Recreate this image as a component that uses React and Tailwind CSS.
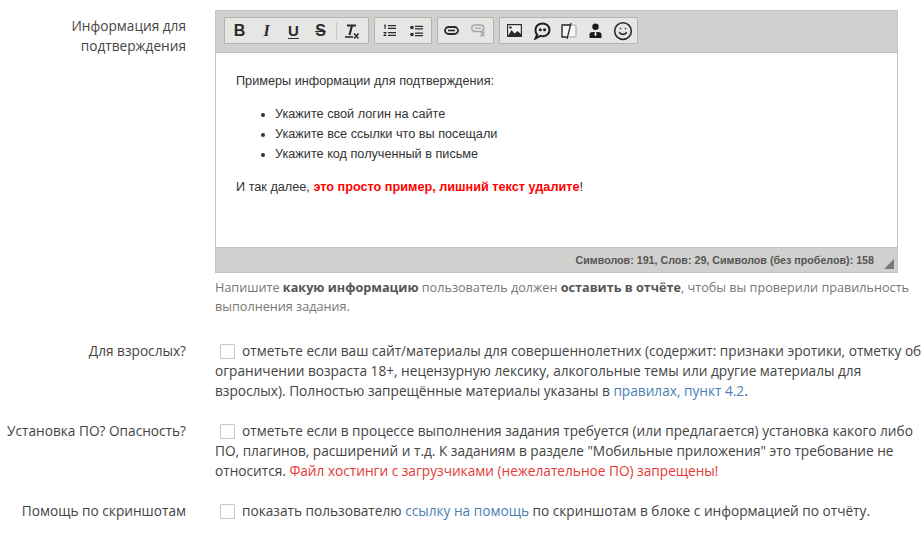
import { Smile } from 'lucide-react'

function Group({ children }) {
    return (
        <div className="flex h-[27px] items-center rounded-[1px] border border-[#b5b5b0] bg-[#e6e6e4] text-[#2b2b2b]">
            {children}
        </div>
    )
}

function Btn({ children, className = '' }) {
    return <span className={`flex h-[20px] w-[27px] items-center justify-center ${className}`}>{children}</span>
}

function Row({ label, top, children }) {
    return (
        <div className="grid grid-cols-[186px_709px] gap-x-[29px]">
            <div className="text-right" style={top ? { paddingTop: top } : undefined}>{label}</div>
            <div>{children}</div>
        </div>
    )
}

function Check() {
    return <span className="mr-[7px] ml-[5px] inline-block h-[15px] w-[15px] rounded-[1px] border border-[#c8c8c8] bg-white align-[-3px]"></span>
}

export default function App() {
    return (
        <div className="h-[533px] w-[924px] overflow-hidden bg-white pt-[10px] font-['Open_Sans',sans-serif] text-[13.670px] leading-[20px] text-[#444]">
            <Row label={<span className="block pl-[40px]">Информация для подтверждения</span>} top="6px">
                <div className="w-[683px] border border-[#c4c4c0]">
                    <div className="flex h-[41px] gap-[5px] bg-[#d0d1ce] pt-[6px] pl-[8px]">
                        <Group>
                            <span className="w-px"></span>
                            <Btn className="font-['Liberation_Sans',sans-serif] text-[16px] font-bold">B</Btn>
                            <Btn className="font-['Liberation_Serif',serif] text-[16px] font-bold italic">I</Btn>
                            <Btn className="font-['Liberation_Sans',sans-serif] text-[15px] font-bold underline underline-offset-2">U</Btn>
                            <Btn className="font-['Liberation_Sans',sans-serif] text-[16px] font-bold line-through">S</Btn>
                            <span className="mr-px ml-[2px] h-[18px] w-px bg-[#c9c9c6]"></span>
                            <Btn>
                                <svg width="18" height="18" viewBox="0 0 18 18" fill="none" stroke="#2b2b2b">
                                    <path d="M4 3.500h9M9 3.500 6.500 13" strokeWidth="2.200" />
                                    <path d="M2 15h8" strokeWidth="1.600" />
                                    <path d="m11 11.500 4.500 5m0-5L11 16.500" strokeWidth="1.500" />
                                </svg>
                            </Btn>
                            <span className="w-[3px]"></span>
                        </Group>
                        <Group>
                            <span className="w-px"></span>
                            <Btn>
                                <svg width="13" height="13" viewBox="0 0 13 13" fill="#2b2b2b">
                                    <path d="M1.500.5h1.200v4.500H1.500zM.8 1.200h1v.8h-1z" />
                                    <path d="M.5 8h3v1l-1.700 2h1.700v1h-3v-1l1.700-2H.5z" />
                                    <path d="M5 1h8v1.300H5zM5 3.700h8V5H5zM5 8h8v1.300H5zM5 10.700h8V12H5z" />
                                </svg>
                            </Btn>
                            <Btn>
                                <svg width="13" height="12" viewBox="0 0 13 12" fill="#2b2b2b">
                                    <circle cx="2" cy="2.500" r="1.800" />
                                    <circle cx="2" cy="9.500" r="1.800" />
                                    <path d="M5 .8h8v1.300H5zM5 3.200h8v1.300H5zM5 7.500h8v1.300H5zM5 9.900h8v1.300H5z" />
                                </svg>
                            </Btn>
                            <span className="w-px"></span>
                        </Group>
                        <Group>
                            <Btn>
                                <svg width="15" height="9" viewBox="0 0 15 9" fill="none" stroke="#2b2b2b">
                                    <rect x="1" y="1" width="13" height="7" rx="3.500" strokeWidth="1.800" />
                                    <path d="M4 4.500h7" strokeWidth="1.600" />
                                </svg>
                            </Btn>
                            <Btn>
                                <svg width="15" height="13" viewBox="0 0 15 13" fill="none" stroke="#a8a8a8">
                                    <rect x=".8" y="1" width="12" height="6.500" rx="3.250" strokeWidth="1.500" />
                                    <path d="M4 4.250h6" strokeWidth="1.300" />
                                    <path d="m9.500 7.500 4 5m0-5-4 5" strokeWidth="1.300" />
                                </svg>
                            </Btn>
                            <span className="w-px"></span>
                        </Group>
                        <Group>
                            <span className="w-px"></span>
                            <Btn>
                                <svg width="15" height="13" viewBox="0 0 15 13">
                                    <rect x=".6" y=".6" width="13.800" height="11.800" fill="#f2f2f2" stroke="#2b2b2b" strokeWidth="1.200" />
                                    <path d="M1 12 4.500 6l3 3.500 3-2.500L14 10v2z" fill="#2b2b2b" />
                                    <circle cx="3.500" cy="3.500" r="1.200" fill="#2b2b2b" />
                                </svg>
                            </Btn>
                            <Btn>
                                <svg width="18" height="18" viewBox="0 0 18 18">
                                    <path d="M9.500 1.500c4 0 7 2.800 7 6.400s-3 6.300-7 6.300c-.8 0-1.500-.1-2.200-.3L2.500 16.500l1.600-3.800C2.800 11.400 2.500 9.800 2.500 7.900c0-3.600 3-6.400 7-6.400z" fill="none" stroke="#1f1f1f" strokeWidth="2" />
                                    <circle cx="7.300" cy="7.800" r="1.500" fill="#1f1f1f" />
                                    <circle cx="11.600" cy="7.800" r="1.500" fill="#1f1f1f" />
                                </svg>
                            </Btn>
                            <Btn>
                                <svg width="16" height="18" viewBox="0 0 16 18" fill="none">
                                    <rect x="1" y="3" width="14" height="12" rx="1" fill="#f4f4f4" stroke="#a5a5a5" />
                                    <path d="M9 3H1v12h4.500" stroke="#2b2b2b" strokeWidth="1.300" />
                                    <path d="M10 1 6 17" stroke="#2b2b2b" strokeWidth="1.300" />
                                </svg>
                            </Btn>
                            <Btn>
                                <svg width="13" height="15" viewBox="0 0 13 15">
                                    <circle cx="6.500" cy="3.700" r="3.200" fill="#1a1a1a" />
                                    <path d="M.5 15v-3.500C.5 9.800 2 9 4 9h5c2 0 3.500.8 3.500 2.500V15z" fill="#1a1a1a" />
                                    <path d="M5.800 9h1.400l.4 3-1.100 1.300L5.400 12z" fill="#e6e6e4" />
                                </svg>
                            </Btn>
                            <Btn><Smile size={20} strokeWidth={1.900} /></Btn>
                            <span className="w-px"></span>
                        </Group>
                    </div>
                    <div className="h-[195px] border-t border-[#c4c4c0] bg-white px-[20px] pt-[18px] font-['Liberation_Sans',sans-serif] text-[12.680px] leading-[20px] text-[#333]">
                        <p>Примеры информации для подтверждения:</p>
                        <ul className="mt-[13px] list-disc pl-[39px]">
                            <li>Укажите свой логин на сайте</li>
                            <li>Укажите все ссылки что вы посещали</li>
                            <li>Укажите код полученный в письме</li>
                        </ul>
                        <p className="mt-[13px]">И так далее, <b className="text-[#f00]">это просто пример, лишний текст удалите</b>!</p>
                    </div>
                    <div className="relative flex h-[25px] items-center justify-end border-t border-[#c4c4c0] bg-[#d0d1ce] pr-[23px] font-['Liberation_Sans',sans-serif] text-[10.700px] font-bold text-[#555]">
                        Символов: 191, Слов: 29, Символов (без пробелов): 158
                        <svg className="absolute right-[3px] bottom-[3px]" width="10" height="10" viewBox="0 0 10 10">
                            <path d="M10 0v10H0z" fill="#777" />
                        </svg>
                    </div>
                </div>
                <p className="mt-[5px] text-[12.650px] leading-[19px] text-[#777]">
                    Напишите <b className="text-[#555]">какую информацию</b> пользователь должен <b className="text-[#555]">оставить в отчёте</b>, чтобы вы проверили правильность выполнения задания.
                </p>
            </Row>
            <div className="mt-[25px]">
                <Row label="Для взрослых?">
                    <Check />отметьте если ваш сайт/материалы для совершеннолетних (содержит: признаки эротики, отметку об ограничении возраста 18+, нецензурную лексику, алкогольные темы или другие материалы для взрослых). Полностью запрещённые материалы указаны в <span className="text-[#4a7fb5]">правилах, пункт 4.2</span>.
                </Row>
            </div>
            <div className="mt-[20px]">
                <Row label="Установка ПО? Опасность?">
                    <Check />отметьте если в процессе выполнения задания требуется (или предлагается) установка какого либо ПО, плагинов, расширений и т.д. К заданиям в разделе "Мобильные приложения" это требование не относится. <span className="text-[#e53935]">Файл хостинги с загрузчиками (нежелательное ПО) запрещены!</span>
                </Row>
            </div>
            <div className="mt-[20px]">
                <Row label="Помощь по скриншотам">
                    <Check />показать пользователю <span className="text-[#4a7fb5]">ссылку на помощь</span> по скриншотам в блоке с информацией по отчёту.
                </Row>
            </div>
        </div>
    )
}
